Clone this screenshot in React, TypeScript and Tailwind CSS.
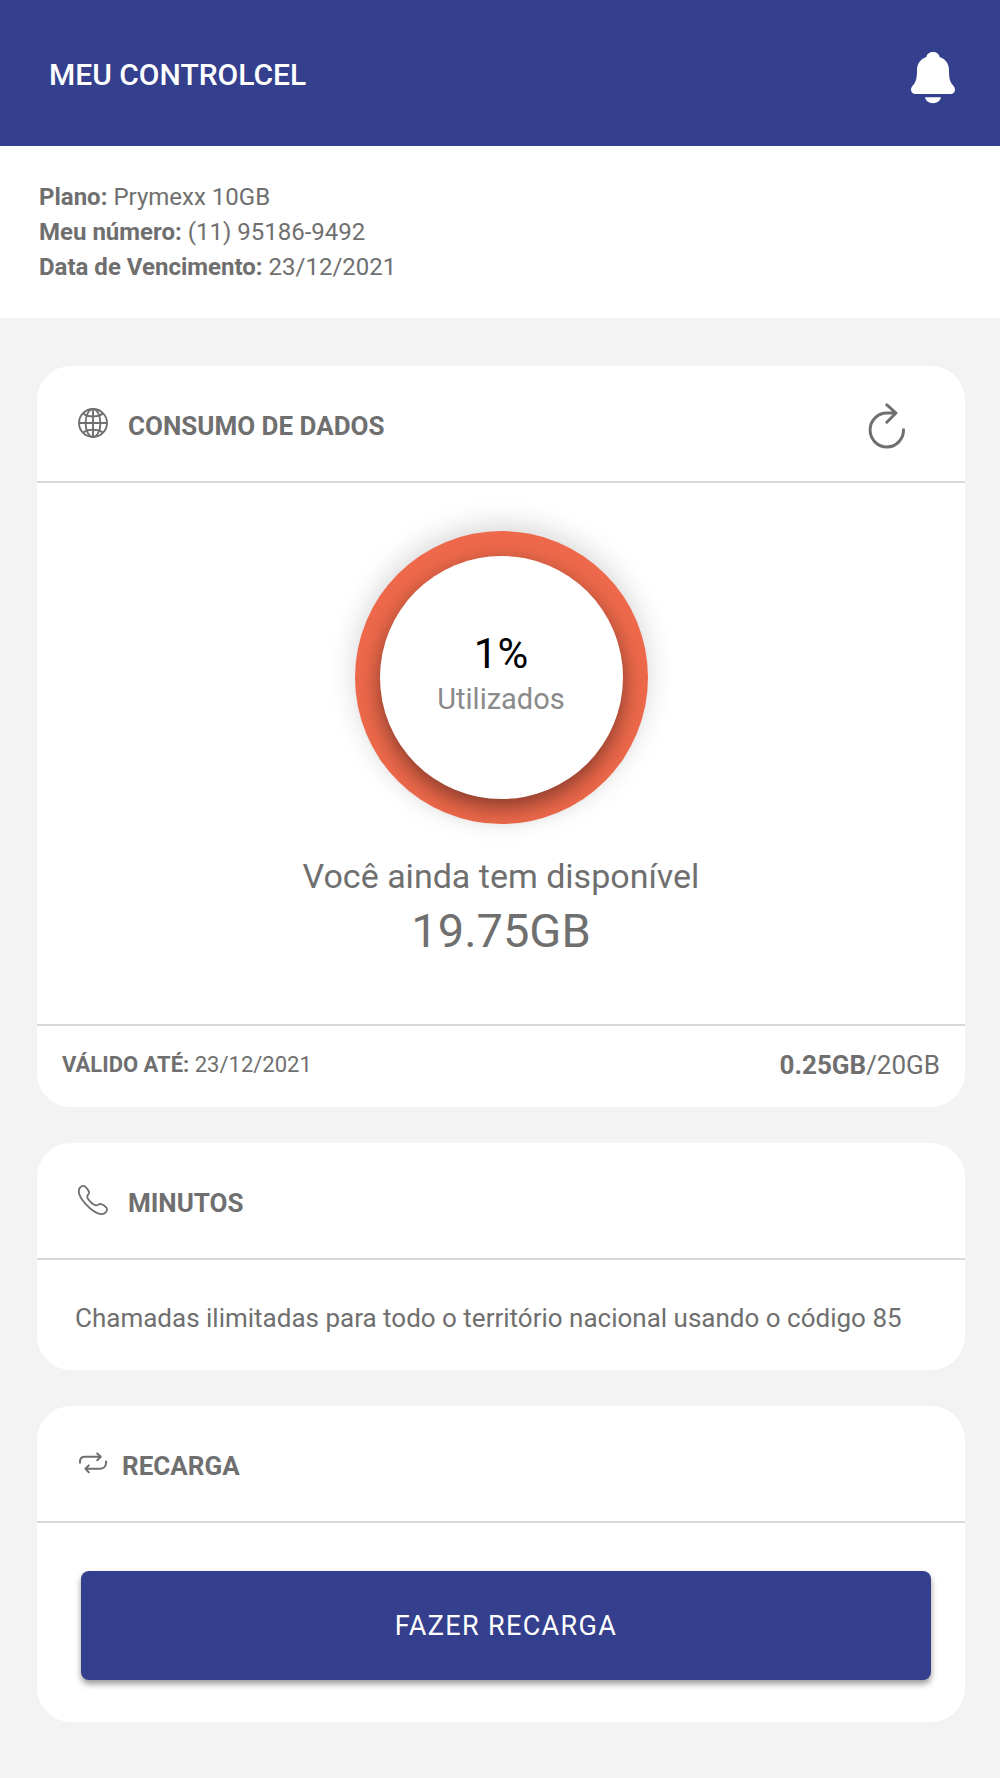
import type { ReactNode } from "react";

function BellIcon() {
  return (
    <svg className="h-[52px] w-11" viewBox="0 0 44 52" fill="currentColor" aria-hidden="true">
      <path d="M22 0C18.6 0 15.9 2 15.3 5.1C9.3 7.2 6 11.8 6 18.5C6 26.3 5 29.6 2.6 32.6C.8 34.8 0 36.1 0 37.7C0 40.2 1.9 42 4.4 42H39.6C42.1 42 44 40.2 44 37.7C44 36.1 43.2 34.8 41.4 32.6C39 29.6 38 26.3 38 18.5C38 11.8 34.7 7.2 28.7 5.1C28.1 2 25.4 0 22 0Z" />
      <path d="M14 45.3H30C29.2 48.8 26.2 51.2 22 51.2S14.8 48.8 14 45.3Z" />
    </svg>
  );
}

function GlobeIcon() {
  return (
    <svg className="h-[30px] w-[30px]" viewBox="0 0 30 30" fill="none" stroke="currentColor" strokeWidth="1.9" aria-hidden="true">
      <circle cx="15" cy="15" r="14" />
      <ellipse cx="15" cy="15" rx="7.4" ry="14" />
      <path d="M15 1V29M1 15H29M5 5.4C8 7.6 11.3 8.4 15 8.4S22 7.6 25 5.4M5 24.6C8 22.4 11.3 21.6 15 21.6S22 22.4 25 24.6" />
    </svg>
  );
}

function PhoneIcon() {
  return (
    <svg className="h-[30px] w-[30px]" viewBox="0 0 30 30" fill="none" stroke="currentColor" strokeWidth="1.8" strokeLinejoin="round" aria-hidden="true">
      <path d="M2 2.6C3.4 1.2 5.6 .5 7.2 1.6C8.8 2.9 10.3 5 11.1 7C11.7 8.6 9.3 9.8 9.2 11.4C9.2 14 15 20.2 18.4 20.4C20 20.4 20.6 18.8 22.2 18.9C24.2 19.2 26.8 20.8 28.4 22.7C29.5 24.1 29.1 25.6 28 27C26.7 28.6 25 29.4 22.5 29.1C18.6 28.5 12 23.9 7.3 18.7C3.3 14.2 .9 9.8 .8 6.6C.8 4.9 1.1 3.6 2 2.6Z" />
    </svg>
  );
}

function RepeatIcon() {
  return (
    <svg className="h-[30px] w-[30px]" viewBox="0 0 30 30" fill="none" stroke="currentColor" strokeWidth="2" strokeLinecap="round" strokeLinejoin="round" aria-hidden="true">
      <path d="M2 14.8V13.4C2 10.4 4.2 8.8 7 8.8H22.8M19.2 5.4L22.8 8.8L19.2 12.2" />
      <path d="M28 13.6V14.8C28 18.4 25.4 20.8 22 20.8H7.4M10.8 17.4L7.4 20.8L10.8 24.2" />
    </svg>
  );
}

function RefreshIcon() {
  return (
    <svg className="h-[46px] w-[38px]" viewBox="0 0 38 46" fill="none" stroke="currentColor" strokeWidth="3" strokeLinecap="round" strokeLinejoin="round" aria-hidden="true">
      <path d="M35.5 26.7A16.7 17 0 1 1 18.8 10H27.5M18.8 1.8L28 10L18.8 19.2" />
    </svg>
  );
}

type CardProps = {
  title: string;
  icon: ReactNode;
  action?: ReactNode;
  tight?: boolean;
  children: ReactNode;
};

function Card({ title, icon, action, tight = false, children }: CardProps) {
  return (
    <section className="overflow-hidden rounded-[34px] bg-white">
      <div className="flex h-[117px] items-center justify-between border-b-2 border-[#d8d8d8] pt-1 pr-[59px] pl-[41px]">
        <div className={tight ? "flex items-center gap-3.5" : "flex items-center gap-5"}>
          <span className="pb-1.5">{icon}</span>
          <h2 className="text-[26px] leading-8 font-bold">{title}</h2>
        </div>
        {action}
      </div>
      {children}
    </section>
  );
}

const plan = [
  { label: "Plano:", value: "Prymexx 10GB" },
  { label: "Meu número:", value: "(11) 95186-9492" },
  { label: "Data de Vencimento:", value: "23/12/2021" },
];

export default function App() {
  return (
    <div className="min-h-screen bg-[#f3f3f3] font-['Roboto',sans-serif] text-[#6f6f6f]">
      <header className="flex h-[146px] items-center justify-between bg-[#343f8d] pt-1 pr-[45px] pl-[49px] text-white">
        <h1 className="text-[30px] leading-10 font-medium">MEU CONTROLCEL</h1>
        <button type="button" aria-label="Notificações" className="mt-1.5">
          <BellIcon />
        </button>
      </header>

      <dl className="bg-white px-[39px] pt-[34px] pb-[33px] text-[24px] leading-[35px]">
        {plan.map((row) => (
          <div key={row.label} className="flex gap-1.5">
            <dt className="font-bold">{row.label}</dt>
            <dd>{row.value}</dd>
          </div>
        ))}
      </dl>

      <main className="flex flex-col gap-9 pt-12 pr-[35px] pb-14 pl-[37px]">
        <Card
          title="CONSUMO DE DADOS"
          icon={<GlobeIcon />}
          action={
            <button type="button" aria-label="Atualizar">
              <RefreshIcon />
            </button>
          }
        >
          <div className="flex flex-col items-center pt-12">
            <div className="rounded-full bg-[#ee694b] p-[25px] shadow-[0_-6px_28px_rgba(0,0,0,0.16)]">
              <div className="flex size-[243px] flex-col items-center justify-center rounded-full bg-white pb-2 shadow-[0_8px_22px_rgba(0,0,0,0.45)]">
                <p className="text-[42px] leading-[50px] text-black">1%</p>
                <p className="text-[29px] leading-10 text-[#8a8a8a]">Utilizados</p>
              </div>
            </div>
            <p className="mt-8 text-[34px] leading-10">Você ainda tem disponível</p>
            <p className="text-[47px] leading-[70px]">19.75GB</p>
          </div>
          <div className="mt-[58px] flex h-[83px] items-center justify-between border-t-2 border-[#d8d8d8] pr-[25px] pb-1 pl-[25px]">
            <p className="text-[22px] leading-8">
              <strong className="font-bold">VÁLIDO ATÉ:</strong> 23/12/2021
            </p>
            <p className="text-[26px] leading-8">
              <strong className="font-bold">0.25GB</strong>/20GB
            </p>
          </div>
        </Card>

        <Card title="MINUTOS" icon={<PhoneIcon />}>
          <p className="px-[38px] pt-[42px] pb-9 text-[26px] leading-8">
            Chamadas ilimitadas para todo o território nacional usando o código 85
          </p>
        </Card>

        <Card title="RECARGA" icon={<RepeatIcon />} tight>
          <div className="pt-12 pr-[34px] pb-[42px] pl-11">
            <button
              type="button"
              className="h-[109px] w-full rounded-lg bg-[#343f8d] text-[27px] leading-8 tracking-wider text-white shadow-[0_4px_6px_rgba(0,0,0,0.4)]"
            >
              FAZER RECARGA
            </button>
          </div>
        </Card>
      </main>
    </div>
  );
}
